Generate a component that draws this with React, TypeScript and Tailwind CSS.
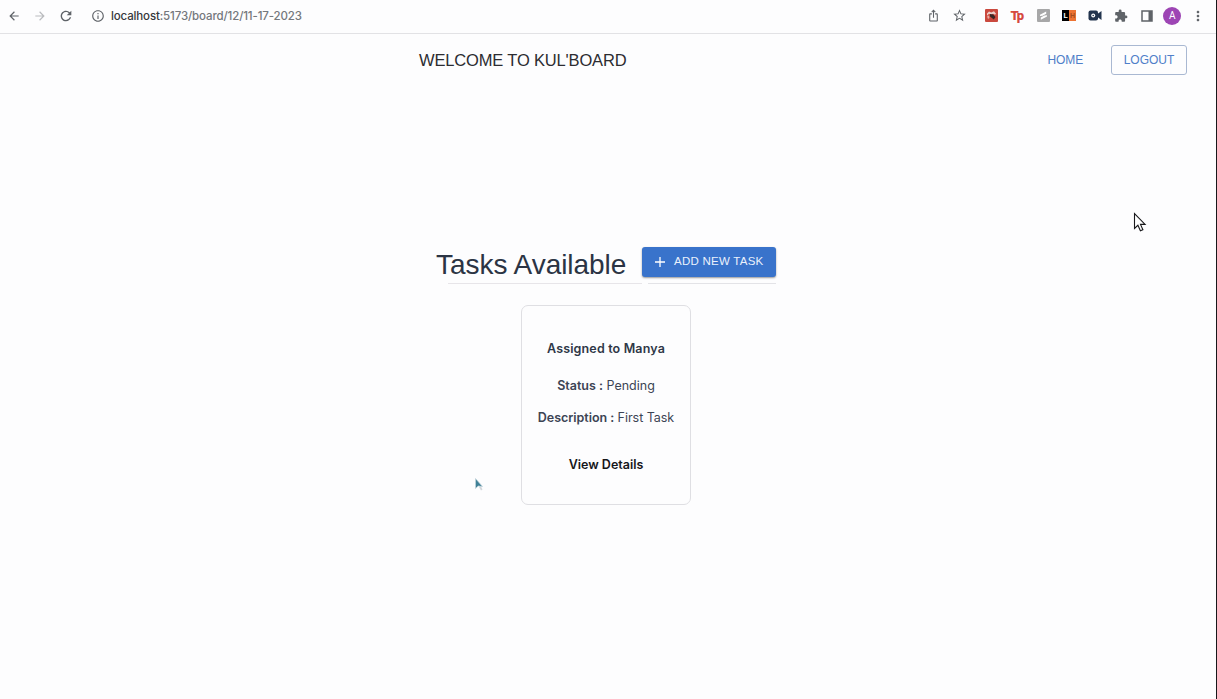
import React from 'react';
import { MdArrowBack, MdArrowForward, MdRefresh, MdInfoOutline, MdIosShare, MdStarBorder, MdExtension, MdMoreVert } from 'react-icons/md';

function Cell({ children }: { children: React.ReactNode }) {
  return <div className="flex h-8 w-[25.8px] items-center justify-center">{children}</div>;
}

function BrowserBar() {
  return (
    <header className="flex h-[34px] items-center border-b border-[#e2e2e5] pb-0.5 text-[#5f6368]">
      <div className="flex w-[87px] items-center gap-[12px] pl-[7px]">
        <MdArrowBack size={14} className="shrink-0" />
        <MdArrowForward size={14} className="shrink-0 text-[#b9bbbe]" />
        <MdRefresh size={16} className="-ml-px shrink-0" />
      </div>
      <div className="flex items-center gap-[6px] pl-1">
        <MdInfoOutline size={14} />
        <span className="whitespace-nowrap pt-[2px] font-['Inter',sans-serif] text-[11.5px] font-medium tracking-[-0.14px] text-[#74777c]">
          <span className="text-[#35373b]">localhost</span>:5173/board/12/11-17-2023
        </span>
      </div>
      <div className="ml-auto flex items-center pr-[5px]">
        <Cell><MdIosShare size={13} className="mr-px" /></Cell>
        <div className="mr-[6px]"><Cell><MdStarBorder size={15} /></Cell></div>
        <Cell>
          <svg width="13" height="13" viewBox="0 0 13 13">
            <rect width="13" height="13" rx="1" fill="#ca493e" />
            <path d="M2 4.5l2-2 2.2 1 2.8-1.2 2 2.5-1 1-2-1-2 1-2-1-2 2z" fill="#ecd0ca" />
            <path d="M5 5l3.2.5L10.5 8l-1.7 2.5L5 7.5z" fill="#392725" />
            <path d="M2 7.5l2-1 .5 2.5L3 10z" fill="#e5aaa0" />
          </svg>
        </Cell>
        <Cell><span className="pr-[2px] font-['Roboto',sans-serif] text-[13px] font-black leading-4 tracking-[-1.5px] text-[#d6493e]">Tp</span></Cell>
        <Cell>
          <svg width="13" height="13" viewBox="0 0 13 13">
            <rect width="13" height="13" rx="1" fill="#a7a7a8" />
            <path d="M3 5.7l6.2-3.2v2.3L5.5 6.7 3 7zM3.8 8.5l3.7-2 2.5-.3v1.4l-6.2 3.2z" fill="white" />
          </svg>
        </Cell>
        <Cell>
          <div className="flex h-[11px] w-[14px] font-['Liberation_Sans',sans-serif] text-[7px] font-bold leading-[11px]">
            <span className="w-[7px] bg-black text-center text-white">L</span>
            <span className="w-[7px] bg-[#ed7332] text-center text-[#a44d20]">H</span>
          </div>
        </Cell>
        <Cell>
          <svg width="14" height="11" viewBox="0 0 14 11">
            <rect x=".5" y=".5" width="9.5" height="10" rx="2" fill="#23344e" />
            <path d="M9 4.3L13.5 1v9L9 6.7z" fill="#23344e" />
            <circle cx="5.2" cy="5.5" r="2" fill="white" />
            <circle cx="5.2" cy="5.5" r=".8" fill="#23344e" />
          </svg>
        </Cell>
        <Cell><MdExtension size={14} /></Cell>
        <Cell>
          <svg width="12" height="12" viewBox="0 0 12 12">
            <path d="M1 1h10v10H1z" fill="none" stroke="currentColor" strokeWidth="1.5" />
            <path d="M7.5 1H11v10H7.5z" fill="currentColor" />
          </svg>
        </Cell>
        <Cell><span className="flex size-[18px] items-center justify-center rounded-full bg-[#9d45b4] font-['Roboto',sans-serif] text-[10px] text-white">A</span></Cell>
        <Cell><MdMoreVert size={16} /></Cell>
      </div>
    </header>
  );
}

function NavBar() {
  return (
    <nav className="flex h-[51px] items-center pl-[419px] pr-[29px]">
      <h1 className="whitespace-nowrap text-[16.5px] leading-6 tracking-[-0.16px] text-[#2c2c31]">WELCOME TO KUL'BOARD</h1>
      <div className="ml-auto flex items-center gap-[28px] text-[12px] text-[#4f7fc9]">
        <a className="pt-px tracking-[-0.15px]">HOME</a>
        <button className="h-[30px] w-[76px] rounded-[3px] border border-[#a9b8d2] tracking-[0px]">LOGOUT</button>
      </div>
    </nav>
  );
}

function TaskCard() {
  return (
    <article className="ml-[521px] mt-[21px] flex h-[200px] w-[170px] flex-col items-center whitespace-nowrap rounded-[7px] border border-[#dfdfe3] pt-[33px] font-['Inter',sans-serif] text-[12.5px] leading-5 text-[#3c4454]">
      <h3 className="font-semibold tracking-[0.15px] text-[#2f3747]">Assigned to Manya</h3>
      <p className="mt-[17px]"><b className="font-semibold">Status :</b> Pending</p>
      <p className="mt-[12px] tracking-[-0.04px]"><b className="font-semibold">Description :</b> First Task</p>
      <button className="mt-[27px] font-semibold text-[#16161a]">View Details</button>
    </article>
  );
}

export default function App() {
  return (
    <div className="relative h-[699px] w-[1217px] overflow-hidden border-r border-[#17171a] bg-[#fdfdfe] font-['Liberation_Sans',Arial,sans-serif]">
      <BrowserBar />
      <NavBar />
      <main className="pt-[162px]">
        <div className="flex h-[36px] items-start pl-[436px]">
          <h2 className="w-[206px] whitespace-nowrap text-[28px] leading-[35px] tracking-[-0.04px] text-[#2b3444]">Tasks Available</h2>
          <button className="flex h-[30px] w-[134px] items-center rounded-[3px] bg-[#3973cb] pl-[12px] text-[11.5px] text-[#eaf1fc] shadow-[0_1px_2px_rgba(0,0,0,0.4)]">
            <svg width="12" height="12" viewBox="0 0 12 12" className="mr-[8px] shrink-0">
              <path d="M6 1v10M1 6h10" stroke="white" strokeWidth="1.3" />
            </svg>
            <span className="whitespace-nowrap tracking-[0.25px]">ADD NEW TASK</span>
          </button>
        </div>
        <div className="flex gap-[6px] pl-[448px]">
          <div className="h-px w-[194px] bg-[#e7e5e9]" />
          <div className="h-px w-[128px] bg-[#e3e3e7]" />
        </div>
        <TaskCard />
      </main>
      <svg className="absolute left-[1133px] top-[212px]" width="14" height="21" viewBox="0 0 14 21">
        <path d="M1.5 1.5v15l3.4-3.2 2.5 5.5 2.5-1.1-2.4-5.3h4.6z" fill="white" stroke="#18181b" strokeWidth="1.1" />
      </svg>
      <svg className="absolute left-[474px] top-[477px]" width="10" height="15" viewBox="0 0 10 15">
        <path d="M5 10l2 3.5 1.5-1-1.5-3z" fill="#d4d8dc" />
        <path d="M1.5 1.5v10L4.2 9l4.3.5z" fill="#3f8197" stroke="#c5d5dd" strokeWidth=".7" />
      </svg>
    </div>
  );
}
